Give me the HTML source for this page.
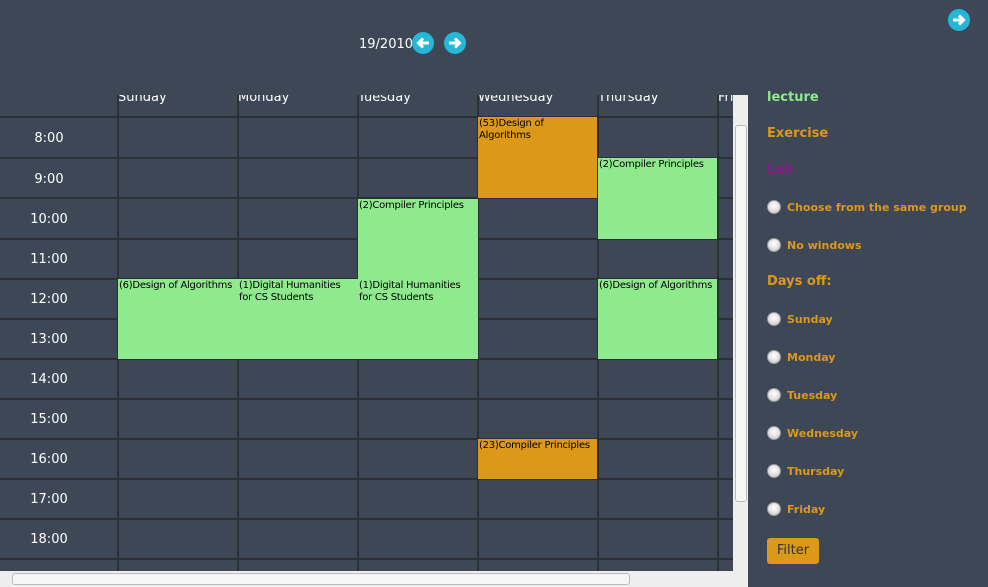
<!DOCTYPE html>
<html style="overflow:hidden"><head><style>
body{margin:0;width:988px;height:587px;background:#3d4756;font-family:"DejaVu Sans","Liberation Sans",sans-serif;position:relative;overflow:hidden}
.a{position:absolute}
.h{position:absolute;left:0;width:733px;height:2px;background:#2b2f36}
.v{position:absolute;width:2px;background:#2b2f36}
.t{position:absolute;width:98px;text-align:center;color:#fff;font-size:13px}
.d{position:absolute;top:90px;color:#fff;font-size:13px}
.ev{position:absolute;font-size:10px;letter-spacing:-0.25px;color:#000;line-height:12px;padding-left:1px;padding-top:1px;box-sizing:border-box;white-space:nowrap}
.g{background:#8eea8d}.o{background:#dc9818}
.r{position:absolute;left:767px;font-size:11px;font-weight:bold;color:#dc9818}
.r i{position:absolute;left:0;top:-1px;width:14px;height:14px;border-radius:50%;background:radial-gradient(circle at 50% 40%,#fff,#ddd 60%,#aaa);border:1px solid #999;box-sizing:border-box}
.r span{margin-left:20px}
.btn{position:absolute;width:22px;height:22px;border-radius:50%;background:#26b6d8}
</style></head><body>
<div class="btn" style="left:948px;top:9px"><svg width="22" height="22"><path d="M5 11H14M11 6.5L15.5 11L11 15.5" stroke="#fff" stroke-width="3" fill="none"/></svg></div>
<div class="a" style="left:359px;top:37px;color:#fff;font-size:13px">19/2010</div>
<div class="btn" style="left:412px;top:32px"><svg width="22" height="22"><path d="M17 11H8M11 6.5L6.5 11L11 15.5" stroke="#fff" stroke-width="3" fill="none"/></svg></div>
<div class="btn" style="left:444px;top:32px"><svg width="22" height="22"><path d="M5 11H14M11 6.5L15.5 11L11 15.5" stroke="#fff" stroke-width="3" fill="none"/></svg></div>

<div class="a" style="left:0;top:95px;width:733px;height:476px;overflow:hidden">
<div class="a" style="left:0;top:-95px;width:733px;height:666px">
<div class="d" style="left:118px">Sunday</div><div class="d" style="left:238px">Monday</div><div class="d" style="left:358px">Tuesday</div><div class="d" style="left:478px">Wednesday</div><div class="d" style="left:598px">Thursday</div><div class="d" style="left:718px">Friday</div>
<div class="h" style="top:116px"></div><div class="h" style="top:157px"></div><div class="h" style="top:197px"></div><div class="h" style="top:238px"></div><div class="h" style="top:278px"></div><div class="h" style="top:318px"></div><div class="h" style="top:358px"></div><div class="h" style="top:398px"></div><div class="h" style="top:438px"></div><div class="h" style="top:478px"></div><div class="h" style="top:518px"></div><div class="h" style="top:558px"></div>
<div class="v" style="left:117px;top:95px;height:500px"></div><div class="v" style="left:237px;top:95px;height:500px"></div><div class="v" style="left:357px;top:95px;height:500px"></div><div class="v" style="left:477px;top:95px;height:500px"></div><div class="v" style="left:597px;top:95px;height:500px"></div><div class="v" style="left:717px;top:95px;height:500px"></div>
<div class="t" style="top:131px">8:00</div><div class="t" style="top:172px">9:00</div><div class="t" style="top:212px">10:00</div><div class="t" style="top:252px">11:00</div><div class="t" style="top:292px">12:00</div><div class="t" style="top:332px">13:00</div><div class="t" style="top:372px">14:00</div><div class="t" style="top:412px">15:00</div><div class="t" style="top:452px">16:00</div><div class="t" style="top:492px">17:00</div><div class="t" style="top:532px">18:00</div>
<div class="ev o" style="left:478px;top:117px;width:119px;height:81px">(53)Design of<br>Algorithms</div>
<div class="ev g" style="left:598px;top:158px;width:119px;height:81px">(2)Compiler Principles</div>
<div class="ev g" style="left:358px;top:199px;width:120px;height:80px">(2)Compiler Principles</div>
<div class="ev g" style="left:118px;top:279px;width:360px;height:80px"></div>
<div class="ev" style="left:118px;top:279px">(6)Design of Algorithms</div>
<div class="ev" style="left:238px;top:279px">(1)Digital Humanities<br>for CS Students</div>
<div class="ev" style="left:358px;top:279px">(1)Digital Humanities<br>for CS Students</div>
<div class="ev g" style="left:598px;top:279px;width:119px;height:80px">(6)Design of Algorithms</div>
<div class="ev o" style="left:478px;top:439px;width:119px;height:40px">(23)Compiler Principles</div>
</div></div>
<div class="a" style="left:733px;top:95px;width:15px;height:476px;background:#eee"><div class="a" style="left:2px;top:30px;width:10px;height:375px;border:1px solid #bbb;border-radius:3px;background:#f6f6f6"></div></div>
<div class="a" style="left:0;top:571px;width:748px;height:16px;background:#eee"><div class="a" style="left:12px;top:2px;width:616px;height:10px;border:1px solid #bbb;border-radius:3px;background:#f6f6f6"></div></div>

<div class="a" style="left:767px;top:90px;font-size:13px;font-weight:bold;color:#8eea8d">lecture</div>
<div class="a" style="left:767px;top:126px;font-size:13px;font-weight:bold;color:#dc9818">Exercise</div>
<div class="a" style="left:767px;top:162px;font-size:13px;font-weight:bold;color:#8a1a8a">Lab</div>
<div class="r" style="top:201px"><i></i><span>Choose from the same group</span></div>
<div class="r" style="top:239px"><i></i><span>No windows</span></div>
<div class="a" style="left:767px;top:274px;font-size:13px;font-weight:bold;color:#dc9818">Days off:</div>
<div class="r" style="top:313px"><i></i><span>Sunday</span></div>
<div class="r" style="top:351px"><i></i><span>Monday</span></div>
<div class="r" style="top:389px"><i></i><span>Tuesday</span></div>
<div class="r" style="top:427px"><i></i><span>Wednesday</span></div>
<div class="r" style="top:465px"><i></i><span>Thursday</span></div>
<div class="r" style="top:503px"><i></i><span>Friday</span></div>
<div class="a" style="left:767px;top:538px;width:52px;height:26px;background:#dc9818;border-radius:3px;color:#333;font-size:13px;line-height:26px;text-align:center">Filter</div>
</body></html>
